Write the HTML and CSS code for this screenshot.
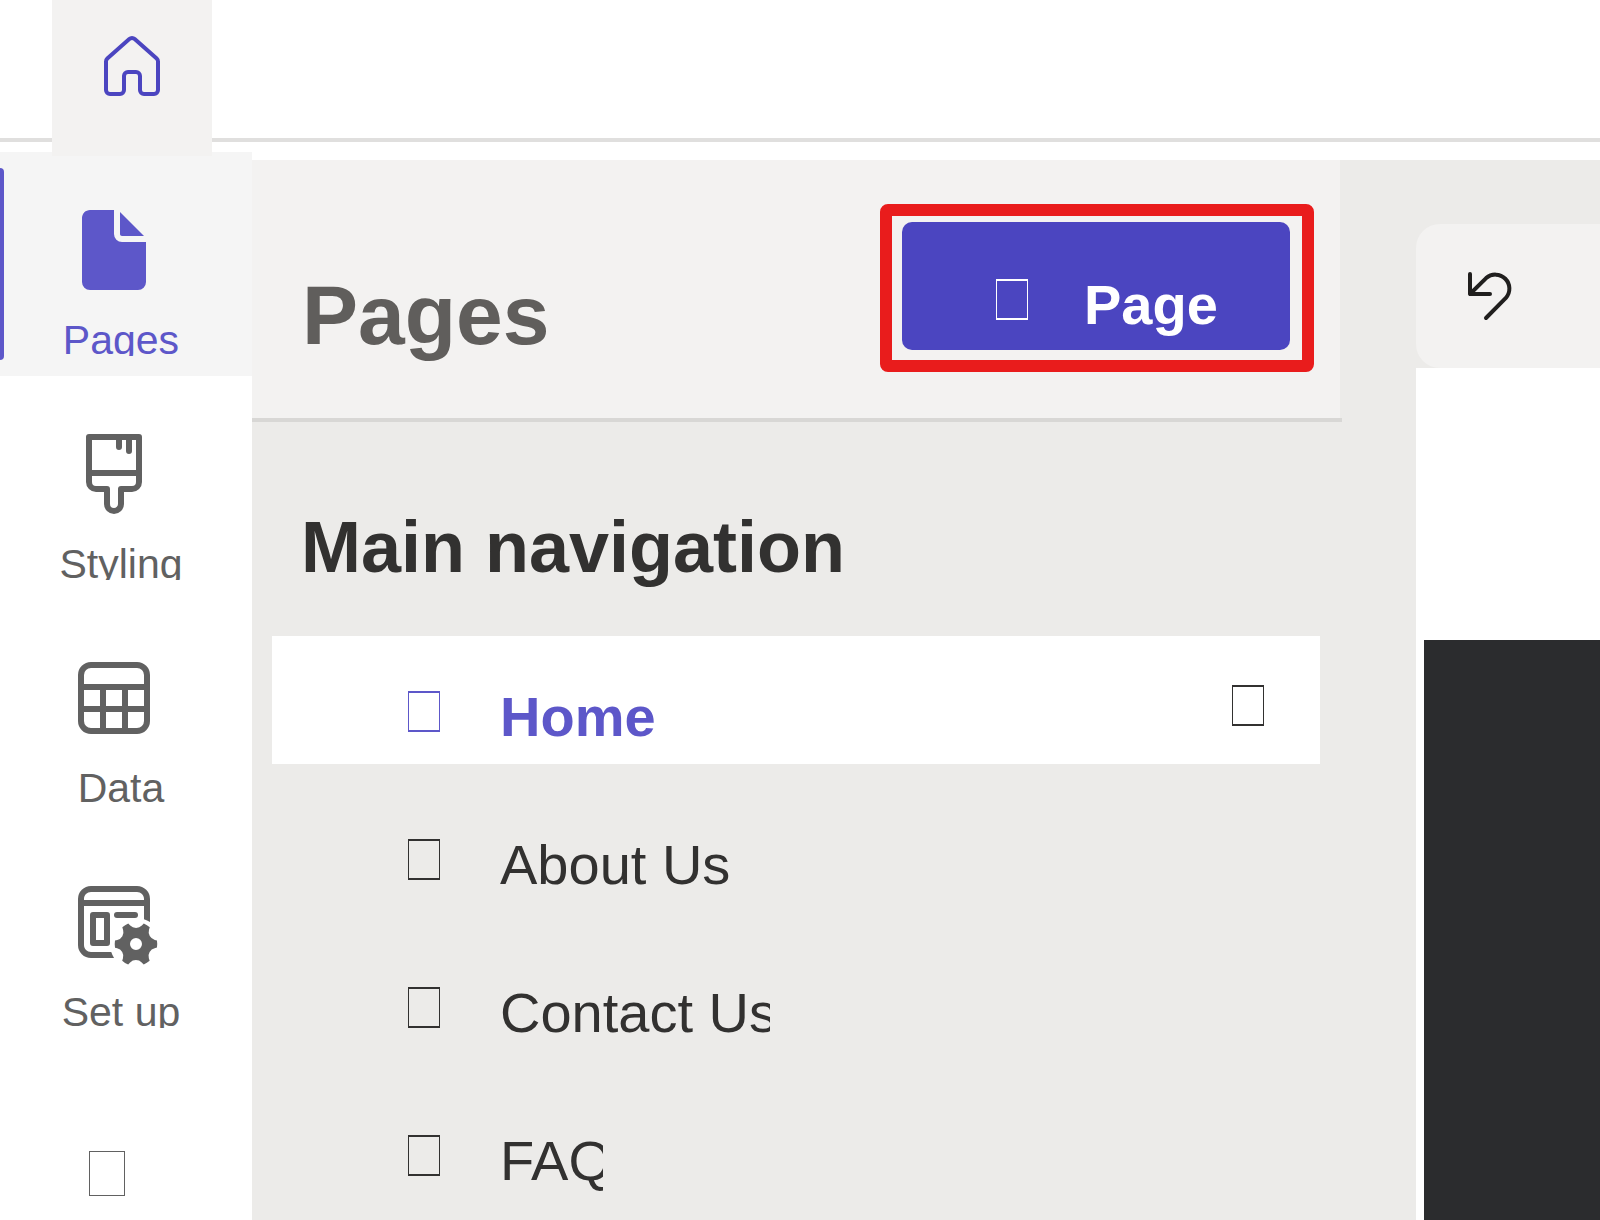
FILE: index.html
```html
<!DOCTYPE html>
<html lang="en">
<head>
<meta charset="utf-8">
<title>Pages</title>
<link rel="stylesheet" href="styles.css">
</head>
<body>
<header class="topbar">
  <a class="home-tile" href="#" aria-label="Go to home">
    <svg class="icon-20" viewBox="0 0 20 20" fill="none" stroke="currentColor" stroke-linejoin="round" aria-hidden="true">
      <path d="M3.5 8.38a1 1 0 0 1 .33-.74l5.5-4.88a1 1 0 0 1 1.34 0l5.5 4.88a1 1 0 0 1 .33.74v7.12a1 1 0 0 1-1 1H13a1 1 0 0 1-1-1V12a1 1 0 0 0-1-1H9a1 1 0 0 0-1 1v3.5a1 1 0 0 1-1 1H4.5a1 1 0 0 1-1-1z"/>
    </svg>
  </a>
</header>
<div class="workspace">
  <nav class="rail" aria-label="Workspaces">
    <button class="rail-item active" type="button">
      <svg class="icon-24" viewBox="0 0 24 24" fill="currentColor" aria-hidden="true">
        <path d="M12 2v6a2 2 0 0 0 2 2h6v10a2 2 0 0 1-2 2H6a2 2 0 0 1-2-2V4c0-1.1.9-2 2-2h6z"/>
        <path d="M13.5 2.5V8c0 .28.22.5.5.5h5.5l-6-6z"/>
      </svg>
      <span class="rail-label">Pages</span>
    </button>
    <button class="rail-item" type="button">
      <svg class="icon-24" viewBox="0 0 24 24" fill="none" stroke="currentColor" stroke-width="1.5" stroke-linecap="round" stroke-linejoin="round" aria-hidden="true">
        <path d="M5.75 2.75h12.5V14a1.75 1.75 0 0 1-1.75 1.75h-2.75v3.75a1.75 1.75 0 0 1-3.5 0v-3.75H7.5A1.75 1.75 0 0 1 5.75 14z"/>
        <path d="M5.75 11.75h12.5M13.25 3v2.25M15.75 3v3.25"/>
      </svg>
      <span class="rail-label">Styling</span>
    </button>
    <button class="rail-item" type="button">
      <svg class="icon-24" viewBox="0 0 24 24" fill="none" stroke="currentColor" stroke-width="1.5" aria-hidden="true">
        <rect x="3.75" y="3.75" width="16.5" height="16.5" rx="2.5"/>
        <path d="M3.75 9.25h16.5M3.75 14.75h16.5M9.25 9.25v11M14.75 9.25v11"/>
      </svg>
      <span class="rail-label">Data</span>
    </button>
    <button class="rail-item" type="button">
      <svg class="icon-24" viewBox="0 0 24 24" fill="none" stroke="currentColor" stroke-width="1.5" aria-hidden="true">
        <path d="M3.75 7.25h16.5"/>
        <rect x="6.75" y="10.25" width="3.5" height="7" stroke-linejoin="round"/>
        <path d="M12.75 10.25h4.5" stroke-linecap="round"/>
        <path fill="currentColor" stroke="none" d="M3 6.25A3.25 3.25 0 0 1 6.25 3h11.5A3.25 3.25 0 0 1 21 6.25V12a6.5 6.5 0 0 0-1.5-.7V6.25c0-.97-.78-1.75-1.75-1.75H6.25c-.97 0-1.75.78-1.75 1.75v11.5c0 .97.78 1.75 1.75 1.75h5.06c.17.53.4 1.04.7 1.5H6.25A3.25 3.25 0 0 1 3 17.75z"/>
        <path fill="currentColor" stroke="none" d="M14.28 13.98a2 2 0 0 1-1.45 2.5l-.58.14a5.7 5.7 0 0 0 0 1.8l.54.13a2 2 0 0 1 1.45 2.51l-.19.64c.44.4.94.71 1.49.95l.49-.52a2 2 0 0 1 2.9 0l.5.52c.54-.24 1.04-.55 1.48-.94l-.2-.67a2 2 0 0 1 1.45-2.5l.58-.14a5.7 5.7 0 0 0 0-1.8l-.54-.13a2 2 0 0 1-1.45-2.51l.19-.64a5 5 0 0 0-1.49-.95l-.49.52a2 2 0 0 1-2.9 0l-.5-.52c-.54.23-1.04.55-1.48.94zM17.5 19a1.5 1.5 0 1 1 0-3 1.5 1.5 0 0 1 0 3z"/>
      </svg>
      <span class="rail-label">Set up</span>
    </button>
    <button class="rail-more" type="button" aria-label="More"><span class="glyph glyph-large"></span></button>
  </nav>
  <section class="panel">
    <header class="panel-header">
      <h1 class="panel-title">Pages</h1>
      <div class="callout">
        <button class="add-page" type="button"><span class="glyph"></span><span class="add-text">Page</span></button>
      </div>
    </header>
    <hr class="divider">
    <h2 class="section-title">Main navigation</h2>
    <ul class="page-list">
      <li class="page-row selected">
        <a class="page-link" href="#"><span class="glyph"></span><span class="page-name">Home</span></a>
        <button class="row-more" type="button" aria-label="More options"><span class="glyph"></span></button>
      </li>
      <li class="page-row"><a class="page-link" href="#"><span class="glyph"></span><span class="page-name">About Us</span></a></li>
      <li class="page-row"><a class="page-link" href="#"><span class="glyph"></span><span class="page-name name-contact">Contact Us</span></a></li>
      <li class="page-row"><a class="page-link" href="#"><span class="glyph"></span><span class="page-name name-faq">FAQ</span></a></li>
    </ul>
  </section>
  <main class="editor">
    <div class="toolbar">
      <button class="tool" type="button" aria-label="Undo">
        <svg class="icon-20" viewBox="0 0 20 20" fill="none" stroke="currentColor" stroke-linecap="round" stroke-linejoin="round" aria-hidden="true">
          <path d="M3.5 4.5v5h5M3.5 9.5l4.03-3.97a3.5 3.5 0 0 1 4.94 4.94L7.5 15.5"/>
        </svg>
      </button>
    </div>
    <div class="canvas"><div class="hero"></div></div>
  </main>
</div>
</body>
</html>
```
FILE: styles.css
```css
* {
  box-sizing: border-box;
}

body {
  margin: 0;
  min-height: 100vh;
  display: flex;
  flex-direction: column;
  background: #fff;
  color: #323130;
  font-family: "Liberation Sans", Arial, sans-serif;
}

button {
  margin: 0;
  padding: 0;
  border: 0;
  background: none;
  color: inherit;
  font: inherit;
  text-align: left;
}

a {
  color: inherit;
  text-decoration: none;
}

.icon-20 {
  display: block;
  width: 80px;
  height: 80px;
}

.icon-24 {
  display: block;
  width: 96px;
  height: 96px;
}

/* Placeholder box for a symbol-font character */
.glyph {
  flex: none;
  display: block;
  width: 32px;
  height: 41px;
  border: solid currentColor;
  border-width: 2px 1px;
}

.glyph-large {
  width: 36px;
  height: 45px;
  border-width: 1px;
}

.topbar {
  height: 142px;
  padding-left: 52px;
  border-bottom: 4px solid #e0dfde;
}

.home-tile {
  position: relative;
  z-index: 1;
  display: flex;
  justify-content: center;
  width: 160px;
  height: 156px;
  padding-top: 28px;
  background: #f3f2f1;
  color: #4b45c0;
}

.workspace {
  flex: 1;
  display: flex;
  padding-top: 10px;
}

.rail {
  flex: none;
  width: 252px;
  color: #616161;
}

.rail-item {
  position: relative;
  display: flex;
  flex-direction: column;
  gap: 26px;
  width: 100%;
  height: 224px;
  padding: 50px 0 0 66px;
}

.rail-item.active {
  background: #f5f5f5;
  color: #5d57c9;
}

.rail-item.active::before {
  content: "";
  position: absolute;
  left: 0;
  top: 16px;
  bottom: 16px;
  width: 4px;
  border-radius: 0 4px 4px 0;
  background: currentColor;
}

.rail-label {
  width: 132px;
  margin-left: -11px;
  height: 32px;
  overflow: hidden;
  font-size: 41px;
  line-height: 32px;
  text-align: center;
}

.rail-more {
  display: block;
  width: 100%;
  padding: 103px 0 0 89px;
}

.panel {
  flex: 0 1 1090px;
  margin-top: 8px;
  background: #ecebe9;
}

.panel-header {
  display: flex;
  justify-content: space-between;
  align-items: flex-start;
  height: 258px;
  margin-right: 2px;
  padding: 44px 26px 0 50px;
  background: #f3f2f1;
}

.panel-title {
  margin: 63px 0 0;
  font-size: 84px;
  line-height: 96px;
  color: #605e5c;
}

.callout {
  padding: 6px 12px 10px 10px;
  border: 12px solid #e91c1c;
  border-radius: 8px;
}

.add-page {
  display: flex;
  gap: 56px;
  width: 388px;
  height: 128px;
  padding: 51px 0 0 94px;
  border-radius: 10px;
  background: #4b45c0;
  color: #fff;
  font-size: 56px;
  font-weight: 700;
  line-height: 64px;
}

.glyph + span {
  display: block;
}

.add-page .glyph,
.page-link .glyph {
  margin-top: 6px;
}

.divider {
  height: 4px;
  margin: 0;
  border: 0;
  background: #d8d7d5;
}

.section-title {
  margin: 85px 49px 49px;
  font-size: 72px;
  line-height: 80px;
}

.page-list {
  display: flex;
  flex-direction: column;
  gap: 20px;
  margin: 0;
  padding: 0 22px 0 20px;
  list-style: none;
}

.page-row {
  display: flex;
  height: 128px;
}

.page-link {
  flex: 1;
  display: flex;
  gap: 60px;
  padding: 49px 0 0 136px;
  font-size: 56px;
  line-height: 64px;
  white-space: nowrap;
}

.page-name {
  height: 64px;
  overflow: hidden;
}

.name-contact {
  width: 270px;
}

.name-faq {
  width: 103px;
}

.selected {
  background: #fff;
}

.selected .page-link {
  color: #5d57c9;
  font-weight: 700;
}

.row-more {
  display: flex;
  align-items: flex-start;
  padding: 49px 56px 0 0;
}

.editor {
  flex: 1;
  display: flex;
  flex-direction: column;
  margin-top: 8px;
  padding: 64px 0 0 74px;
  background: #ecebe9;
}

.toolbar {
  display: flex;
  align-items: center;
  height: 144px;
  padding-left: 40px;
  border-radius: 24px 0 0 24px;
  background: #f3f2f1;
}

.tool {
  color: #201f1e;
}

.canvas {
  flex: 1;
  display: flex;
  padding: 272px 0 0 8px;
  background: #fff;
}

.hero {
  flex: 1;
  background: #2b2c2e;
}
```
